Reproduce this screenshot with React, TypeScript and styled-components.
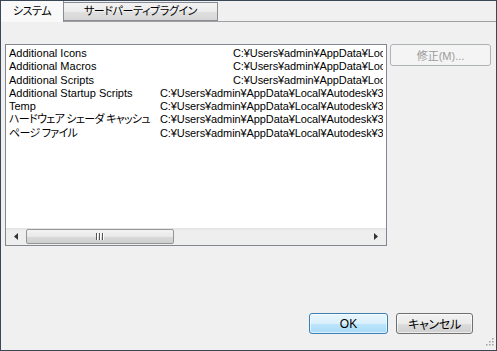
import React from 'react';
import styled, { createGlobalStyle } from 'styled-components';

const GlobalStyle = createGlobalStyle`
  html, body {
    margin: 0;
    padding: 0;
    background: #f0f0f0;
  }
  * {
    box-sizing: border-box;
  }
`;

const FONT = `"Liberation Sans", "Noto Sans CJK JP", sans-serif`;

const Window = styled.div`
  position: relative;
  width: 497px;
  height: 351px;
  background: #f0f0f0;
  border: 1px solid #3a4757;
  display: flex;
  flex-direction: column;
  font-family: ${FONT};
  font-size: 11px;
  font-feature-settings: "palt";
  color: #000;
  overflow: hidden;
`;

const TabBar = styled.div`
  display: flex;
  align-items: flex-end;
  height: 21px;
  border-bottom: 1px solid #a0a0a0;
`;

const Tab = styled.div<{ $active?: boolean }>`
  height: ${(p) => (p.$active ? '22px' : '19px')};
  margin-bottom: ${(p) => (p.$active ? '-1px' : '0')};
  border: 1px solid #898c95;
  border-bottom: ${(p) => (p.$active ? 'none' : '1px solid #898c95')};
  border-left: ${(p) => (p.$active ? 'none' : '0')};
  background: ${(p) =>
    p.$active ? '#f9f9f9' : 'linear-gradient(#f3f3f3, #ececec 50%, #e0e0e0 51%, #d6d6d6)'};
  display: flex;
  align-items: center;
  justify-content: center;
  font-size: 11px;
  letter-spacing: -0.4px;
  line-height: 1;
  white-space: nowrap;
  width: ${(p) => (p.$active ? '63px' : '154px')};
`;

const Content = styled.div`
  flex: 1;
  display: flex;
  align-items: flex-start;
  padding: 22px 4px 0 4px;
  gap: 3px;
`;

const ListBox = styled.div`
  width: 382px;
  height: 202px;
  border: 1px solid #828790;
  background: #fff;
  display: flex;
  flex-direction: column;
`;

const Rows = styled.div`
  flex: 1;
  padding-top: 2px;
  overflow: hidden;
`;

const Row = styled.div`
  display: flex;
  height: 13.3px;
  line-height: 13px;
  white-space: nowrap;
  overflow: hidden;
`;

const NameCell = styled.div<{ $jp?: boolean }>`
  width: 151px;
  flex: none;
  padding-left: 3px;
  overflow: hidden;
  letter-spacing: ${(p) => (p.$jp ? '-0.7px' : '0')};
`;

const PathCell = styled.div<{ $indent: number }>`
  width: 226px;
  flex: none;
  padding-left: ${(p) => p.$indent}px;
  overflow: hidden;
  white-space: nowrap;
  letter-spacing: -0.1px;
`;

const HScroll = styled.div`
  height: 17px;
  background: linear-gradient(#e3e3e3, #eeeeee 3px, #eeeeee);
  display: flex;
  align-items: center;
  padding: 0 4px;
  gap: 4px;
`;

const Arrow = styled.div`
  width: 12px;
  height: 17px;
  display: flex;
  align-items: center;
  justify-content: center;
`;

const Track = styled.div`
  flex: 1;
  height: 17px;
  display: flex;
  align-items: center;
`;

const Thumb = styled.div`
  width: 148px;
  height: 15px;
  border: 1px solid #959595;
  border-radius: 2px;
  background: linear-gradient(#f3f3f3, #e8e8e8 50%, #d9d9d9 51%, #cfcfcf);
  display: flex;
  align-items: center;
  justify-content: center;
  gap: 1px;
`;

const GripLine = styled.span`
  width: 1px;
  height: 7px;
  background: #555;
  box-shadow: 1px 0 0 #fff;
  margin-right: 1px;
`;

const SideButton = styled.button`
  width: 101px;
  height: 22px;
  border: 1px solid #adb2b5;
  border-radius: 3px;
  background: #f4f4f4;
  color: #9a9a9a;
  font-family: ${FONT};
  font-size: 11px;
  font-feature-settings: "palt";
  padding: 0;
`;

const Footer = styled.div`
  display: flex;
  justify-content: flex-end;
  gap: 8px;
  padding: 0 23px 16px 0;
`;

const DialogButton = styled.button<{ $primary?: boolean }>`
  width: ${(p) => (p.$primary ? '79px' : '77px')};
  height: 21px;
  border-radius: 3px;
  border: 1px solid ${(p) => (p.$primary ? '#3c7fb1' : '#707070')};
  background: ${(p) =>
    p.$primary
      ? 'linear-gradient(#eaf6fd, #d9f0fc 50%, #bee6fd 51%, #a7d9f5)'
      : 'linear-gradient(#f2f2f2, #ebebeb 50%, #dddddd 51%, #cfcfcf)'};
  box-shadow: inset 0 0 0 1px rgba(255, 255, 255, 0.6);
  font-family: ${FONT};
  font-size: 12px;
  font-feature-settings: "palt";
  letter-spacing: ${(p) => (p.$primary ? '0' : '-0.3px')};
  color: #000;
  padding: 0;
`;

const SizeGrip = styled.svg`
  position: absolute;
  right: 2px;
  bottom: 2px;
`;

const items = [
  { name: 'Additional Icons', path: 'C:¥Users¥admin¥AppData¥Local¥Autodesk', indent: 76 },
  { name: 'Additional Macros', path: 'C:¥Users¥admin¥AppData¥Local¥Autodesk', indent: 76 },
  { name: 'Additional Scripts', path: 'C:¥Users¥admin¥AppData¥Local¥Autodesk', indent: 76 },
  { name: 'Additional Startup Scripts', path: 'C:¥Users¥admin¥AppData¥Local¥Autodesk¥3ds Max', indent: 3 },
  { name: 'Temp', path: 'C:¥Users¥admin¥AppData¥Local¥Autodesk¥3ds Max', indent: 3 },
  { name: 'ハードウェア シェーダ キャッシュ', path: 'C:¥Users¥admin¥AppData¥Local¥Autodesk¥3ds Max', indent: 3, jp: true },
  { name: 'ページ ファイル', path: 'C:¥Users¥admin¥AppData¥Local¥Autodesk¥3ds Max', indent: 3, jp: true },
];

const App: React.FC = () => {
  return (
    <>
      <GlobalStyle />
      <Window>
        <TabBar>
          <Tab $active>システム</Tab>
          <Tab>サードパーティプラグイン</Tab>
        </TabBar>
        <Content>
          <ListBox>
            <Rows>
              {items.map((it) => (
                <Row key={it.name}>
                  <NameCell $jp={it.jp}>{it.name}</NameCell>
                  <PathCell $indent={it.indent}>{it.path}</PathCell>
                </Row>
              ))}
            </Rows>
            <HScroll>
              <Arrow>
                <svg width="4" height="7" viewBox="0 0 4 7">
                  <path d="M4 0 L0 3.5 L4 7 Z" fill="#333" />
                </svg>
              </Arrow>
              <Track>
                <Thumb>
                  <GripLine />
                  <GripLine />
                  <GripLine />
                </Thumb>
              </Track>
              <Arrow>
                <svg width="4" height="7" viewBox="0 0 4 7">
                  <path d="M0 0 L4 3.5 L0 7 Z" fill="#333" />
                </svg>
              </Arrow>
            </HScroll>
          </ListBox>
          <SideButton disabled>修正(M)...</SideButton>
        </Content>
        <Footer>
          <DialogButton $primary>OK</DialogButton>
          <DialogButton>キャンセル</DialogButton>
        </Footer>
        <SizeGrip width="10" height="10" viewBox="0 0 10 10">
          {[
            [8, 0], [8, 3], [5, 3], [8, 6], [5, 6], [2, 6],
          ].map(([x, y]) => (
            <rect key={`${x}-${y}`} x={x} y={y} width="1.5" height="1.5" fill="#a0a0a0" />
          ))}
        </SizeGrip>
      </Window>
    </>
  );
};

export default App;
